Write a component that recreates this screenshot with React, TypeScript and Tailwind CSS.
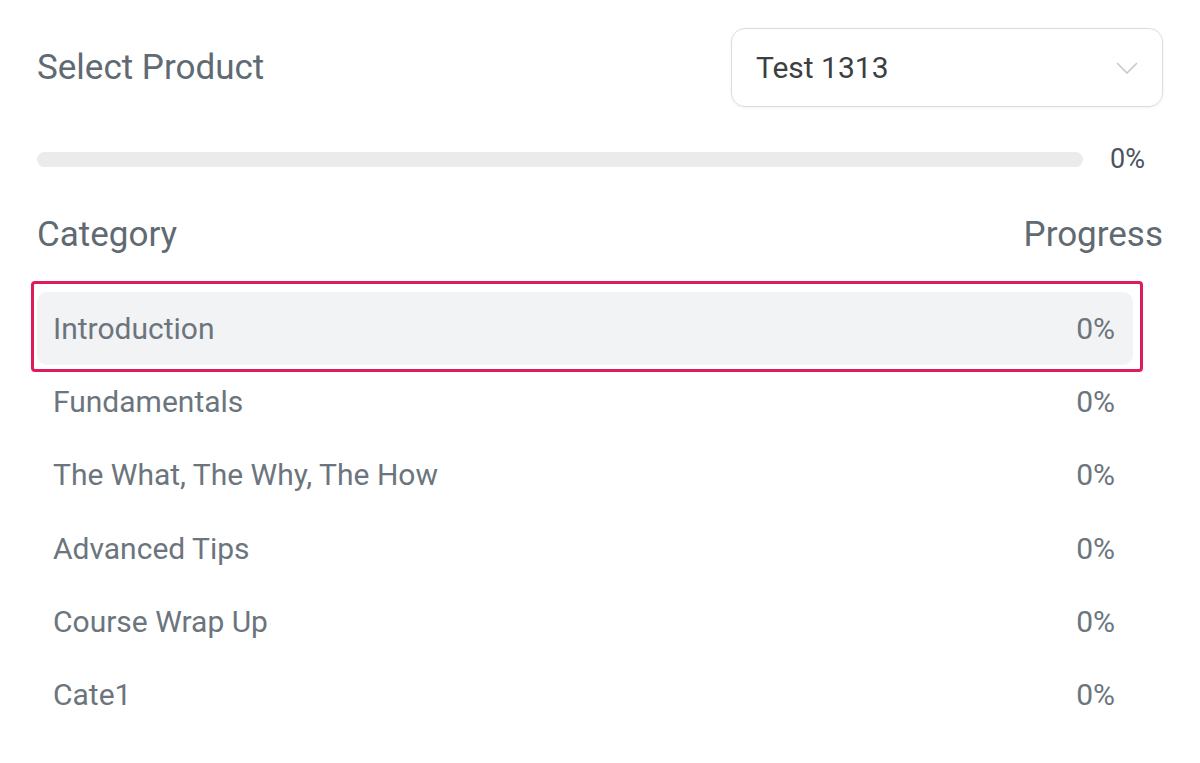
import React from "react";

const categories = [
  { name: "Introduction", progress: 0 },
  { name: "Fundamentals", progress: 0 },
  { name: "The What, The Why, The How", progress: 0 },
  { name: "Advanced Tips", progress: 0 },
  { name: "Course Wrap Up", progress: 0 },
  { name: "Cate1", progress: 0 },
];

export default function App() {
  return (
    <div
      className="w-[1200px] h-[763px] bg-white overflow-hidden"
      style={{ fontFamily: "Roboto, 'Noto Sans', sans-serif" }}
    >
      <div className="pl-[37px] pr-[37px] pt-[28px]">
        {/* Product select */}
        <div className="flex items-center justify-between">
          <span className="text-[35px] leading-none text-[#5f6a72]">Select Product</span>
          <div className="w-[432px] h-[79px] rounded-[14px] border border-[#dcdcdc] shadow-[0_1px_3px_rgba(0,0,0,0.06)] flex items-center justify-between pl-[24px] pr-[24px]">
            <span className="text-[30px] leading-none text-[#3b3f42]">Test 1313</span>
            <svg width="22" height="12" viewBox="0 0 22 12" fill="none">
              <path d="M1 1L11 11L21 1" stroke="#c8c8c8" strokeWidth="1.6" />
            </svg>
          </div>
        </div>

        {/* Overall progress */}
        <div className="flex items-center h-[24px] mt-[40px]">
          <div className="w-[1046px] h-[15px] rounded-full bg-[#ebebeb]" />
          <span className="ml-auto mr-[18px] text-[27px] leading-none text-[#4b5260]">0%</span>
        </div>

        {/* Header */}
        <div className="flex items-center justify-between mt-[46px]">
          <span className="text-[35px] leading-none text-[#5f6a72]">Category</span>
          <span className="text-[35px] leading-none text-[#5f6a72]">Progress</span>
        </div>

        {/* Rows */}
        <div className="relative mt-[40px] w-[1096px]">
          {categories.map((c, i) => (
            <div
              key={c.name}
              className={`h-[73.3px] flex items-center justify-between pl-[16px] pr-[18px] rounded-[10px] text-[30px] leading-none text-[#6c757d] ${
                i === 0 ? "bg-[#f2f3f5]" : ""
              }`}
            >
              <span>{c.name}</span>
              <span>{c.progress}%</span>
            </div>
          ))}
          {/* highlight annotation */}
          <div className="absolute left-[-6px] top-[-11px] w-[1112px] h-[91px] border-[3px] border-[#dc1d5a] rounded-[4px] pointer-events-none" />
        </div>
      </div>
    </div>
  );
}
